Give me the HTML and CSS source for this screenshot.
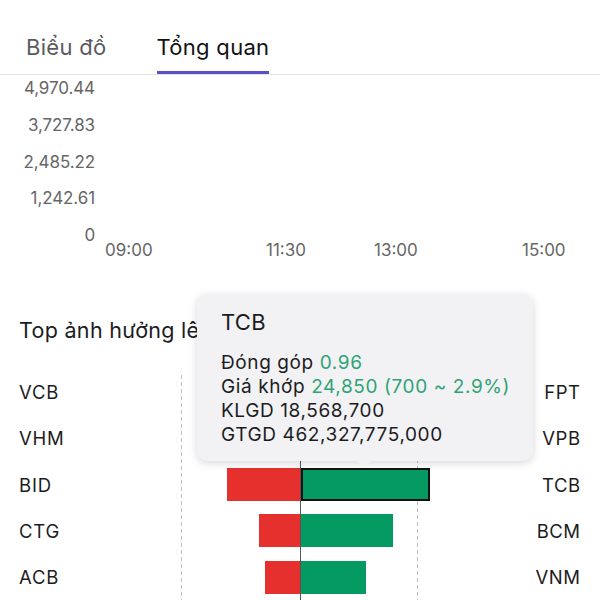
FILE: index.html
```html
<!DOCTYPE html>
<html lang="vi">
<head>
<meta charset="utf-8">
<link rel="stylesheet" href="styles.css">
</head>
<body>
<div class="screen">
  <nav class="tabs">
    <div class="tab">Biểu đồ</div>
    <div class="tab active">Tổng quan</div>
  </nav>

  <section class="chart">
    <div class="y-axis">
      <span>4,970.44</span>
      <span>3,727.83</span>
      <span>2,485.22</span>
      <span>1,242.61</span>
      <span>0</span>
    </div>
    <div class="plot"></div>
    <div class="x-axis">
      <span>09:00</span>
      <span>11:30</span>
      <span>13:00</span>
      <span>15:00</span>
    </div>
  </section>

  <h2 class="title">Top ảnh hưởng lên chỉ số</h2>

  <section class="impact">
    <div class="labels left">
      <div class="label">VCB</div>
      <div class="label">VHM</div>
      <div class="label">BID</div>
      <div class="label">CTG</div>
      <div class="label">ACB</div>
    </div>
    <div class="bars">
      <div class="bar-row">
        <div class="neg"><span class="bar red" style="width:95px"></span></div>
        <div class="pos"><span class="bar green" style="width:150px"></span></div>
      </div>
      <div class="bar-row">
        <div class="neg"><span class="bar red" style="width:85px"></span></div>
        <div class="pos"><span class="bar green" style="width:140px"></span></div>
      </div>
      <div class="bar-row">
        <div class="neg"><span class="bar red" style="width:73px"></span></div>
        <div class="pos"><span class="bar green selected" style="width:129px"></span></div>
      </div>
      <div class="bar-row">
        <div class="neg"><span class="bar red" style="width:41px"></span></div>
        <div class="pos"><span class="bar green" style="width:92px"></span></div>
      </div>
      <div class="bar-row">
        <div class="neg"><span class="bar red" style="width:35px"></span></div>
        <div class="pos"><span class="bar green" style="width:65px"></span></div>
      </div>
    </div>
    <div class="labels right">
      <div class="label">FPT</div>
      <div class="label">VPB</div>
      <div class="label">TCB</div>
      <div class="label">BCM</div>
      <div class="label">VNM</div>
    </div>
  </section>

  <div class="tooltip">
    <div class="tt-title">TCB</div>
    <div class="tt-line">Đóng góp <span class="up">0.96</span></div>
    <div class="tt-line">Giá khớp <span class="up">24,850 (700 ~ 2.9%)</span></div>
    <div class="tt-line">KLGD 18,568,700</div>
    <div class="tt-line">GTGD 462,327,775,000</div>
  </div>
</div>
</body>
</html>
```

FILE: styles.css
```css
* { box-sizing: border-box; }

html, body {
  margin: 0;
  padding: 0;
  background: #ffffff;
}

body {
  font-family: Inter, "Noto Sans", "Liberation Sans", sans-serif;
  color: #1c1c1e;
}

.screen {
  position: relative;
  width: 600px;
  height: 600px;
  overflow: hidden;
  background: #ffffff;
}

/* Tabs */
.tabs {
  display: flex;
  align-items: flex-end;
  gap: 50px;
  height: 75px;
  padding-left: 26px;
  border-bottom: 1px solid #e2e2e6;
}

.tab {
  font-size: 22px;
  line-height: 28px;
  letter-spacing: 0.3px;
  padding-bottom: 10px;
  color: #5a5a5e;
  border-bottom: 3px solid transparent;
}

.tab.active {
  color: #111111;
  border-bottom-color: #5a50c8;
}

/* Chart */
.chart {
  display: grid;
  grid-template-columns: 95px 1fr;
  grid-template-rows: 165px auto;
  padding-top: 4px;
}

.y-axis {
  display: flex;
  flex-direction: column;
  justify-content: space-between;
  align-items: flex-end;
  font-size: 17px;
  line-height: 18px;
  letter-spacing: -0.1px;
  color: #666666;
}

.x-axis {
  grid-column: 1 / -1;
  display: grid;
  grid-template-columns: 161px 108px 148px auto;
  padding-left: 105px;
  margin-top: -3px;
  font-size: 17px;
  line-height: 18px;
  color: #666666;
}

/* Title */
.title {
  margin: 57px 0 0 19px;
  font-size: 21.5px;
  line-height: 28px;
  letter-spacing: 0.3px;
  font-weight: 400;
  color: #1c1c1e;
}

/* Impact chart */
.impact {
  display: flex;
  margin-top: 25px;
}

.labels {
  display: flex;
  flex-direction: column;
}

.labels.left {
  width: 181px;
  padding-left: 19px;
}

.labels.right {
  flex: 1;
  align-items: flex-end;
  padding-right: 20px;
}

.label {
  height: 46.25px;
  display: flex;
  align-items: center;
  font-size: 18.5px;
  letter-spacing: 0.8px;
  color: #1c1c1e;
}

.labels.right .label {
  letter-spacing: 0.5px;
  margin-right: -0.5px;
}

.bars {
  width: 237px;
  display: flex;
  flex-direction: column;
  background-image:
    repeating-linear-gradient(to bottom, #c2c2c2 0 4px, transparent 4px 7px),
    repeating-linear-gradient(to bottom, #c2c2c2 0 4px, transparent 4px 7px);
  background-size: 1px calc(100% - 6px), 1px calc(100% - 6px);
  background-position: left 0 top 6px, right 0 top 6px;
  background-repeat: no-repeat;
}

.bar-row {
  display: grid;
  grid-template-columns: 120px 117px;
  height: 46.25px;
}

.neg {
  display: flex;
  justify-content: flex-end;
  align-items: center;
  border-right: 1px solid #555555;
}

.pos {
  display: flex;
  align-items: center;
}

.bar {
  display: block;
  height: 33px;
  flex: none;
}

.bar.red { background: #e5302e; }
.bar.green { background: #069a63; }
.bar.green.selected { border: 2px solid #111111; }

/* Tooltip */
.tooltip {
  position: absolute;
  left: 197px;
  top: 294px;
  width: 336px;
  height: 167px;
  padding: 14px 0 0 24px;
  background: #f2f2f4;
  border-radius: 10px;
  box-shadow: 0 2px 9px rgba(0, 0, 0, 0.16);
  color: #1c1c1e;
}

.tooltip::after {
  content: "";
  position: absolute;
  left: 160px;
  bottom: -6px;
  border-left: 7px solid transparent;
  border-right: 7px solid transparent;
  border-top: 6px solid #f2f2f4;
}

.tt-title {
  font-size: 22px;
  line-height: 28px;
  letter-spacing: 0.3px;
  margin-bottom: 15px;
}

.tt-line {
  font-size: 19px;
  line-height: 24px;
  letter-spacing: 0.6px;
}

.up { color: #2ea476; }
```
